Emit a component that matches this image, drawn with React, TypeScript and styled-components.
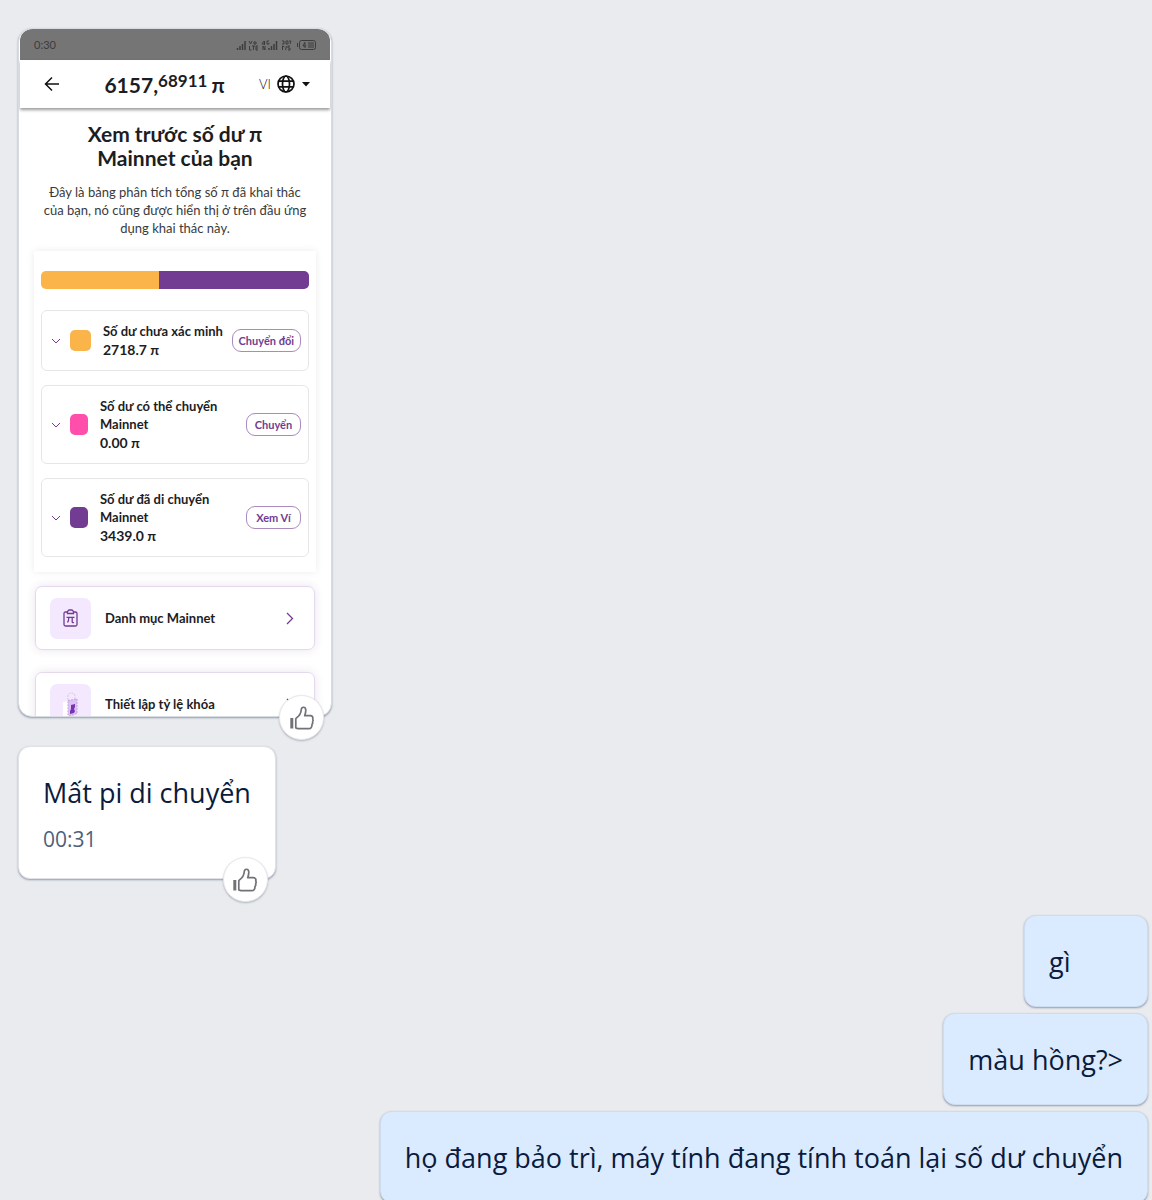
import React from 'react';
import styled, { createGlobalStyle } from 'styled-components';

const Global = createGlobalStyle`
  *, *::before, *::after { box-sizing: border-box; }
  html, body { margin: 0; background: #eaebee; }
  h1, p { margin: 0; }
  button { font-family: inherit; cursor: pointer; }
`;

const UI = `Lato, "Noto Sans", sans-serif`;
const CHAT = `"Open Sans", "Noto Sans", sans-serif`;

const Conversation = styled.main`
  display: flex;
  flex-direction: column;
  min-height: 100vh;
  padding: 28px 4px 0 18px;
  background: #eaebee;
  font-family: ${CHAT};
  color: #0b1b3d;
`;

const Incoming = styled.div<{ $gap?: number }>`
  position: relative;
  align-self: flex-start;
  margin-bottom: ${(p) => p.$gap ?? 0}px;
`;

const Reaction = styled.button`
  position: absolute;
  right: 8px;
  bottom: -23px;
  display: flex;
  align-items: center;
  justify-content: center;
  width: 45px;
  height: 45px;
  padding: 0;
  border: 1px solid #e8e9ec;
  border-radius: 50%;
  background: #fff;
  box-shadow: 0 1px 2px rgba(40, 50, 70, 0.3);
`;

const Bubble = styled.div<{ $own?: boolean }>`
  padding: ${(p) => (p.$own ? '26px 24px 24px' : '26px 24px 25px')};
  min-width: ${(p) => (p.$own ? 124 : 0)}px;
  border: 1px solid ${(p) => (p.$own ? '#cddcee' : '#e0e2e7')};
  border-radius: 12px;
  background: ${(p) => (p.$own ? '#dbebff' : '#fff')};
  box-shadow: 0 1px 2px rgba(60, 75, 110, 0.5);
`;

const Message = styled.p`
  font-size: 27px;
  line-height: 40px;
`;

const Time = styled.time`
  display: block;
  margin-top: 12px;
  font-size: 21px;
  line-height: 28px;
  color: #4f5f7c;
`;

const Outgoing = styled.div`
  display: flex;
  flex-direction: column;
  align-items: flex-end;
  gap: 6px;
`;

const Photo = styled.article`
  width: 314px;
  height: 689px;
  padding: 0 1px;
  overflow: hidden;
  border: 1px solid #d8dbe2;
  border-radius: 14px;
  background: #fff;
  box-shadow: 0 1px 2px rgba(60, 75, 110, 0.5);
  font-family: ${UI};
  color: #1d1d1f;
`;

const StatusBar = styled.div`
  display: flex;
  align-items: center;
  justify-content: space-between;
  height: 31px;
  padding: 0 14px;
  border-radius: 12px 12px 0 0;
  background: #757575;
  font-size: 11px;
  color: #3c3c3c;
`;

const AppBar = styled.header`
  display: flex;
  align-items: center;
  justify-content: space-between;
  height: 48px;
  padding: 0 19px 0 24px;
  background: #fff;
  box-shadow: 0 2px 3px rgba(0, 0, 0, 0.4);
`;

const IconButton = styled.button`
  display: flex;
  padding: 0;
  border: 0;
  background: none;
  color: #111;
`;

const Total = styled.div`
  display: flex;
  align-items: center;
  padding-left: 10px;
  font-size: 21px;
  font-weight: 700;
`;

const Decimals = styled.span`
  padding-bottom: 8px;
  margin-right: 4px;
  font-size: 17px;
`;

const Language = styled.button`
  display: flex;
  align-items: center;
  gap: 6px;
  padding: 0;
  border: 0;
  background: none;
  color: #111;
`;

const LanguageCode = styled.span`
  font-size: 13px;
  font-weight: 300;
`;

const Intro = styled.section`
  padding: 14px 20px;
  text-align: center;
`;

const Title = styled.h1`
  font-size: 21px;
  font-weight: 700;
  line-height: 24px;
`;

const Lead = styled.p`
  margin-top: 13px;
  font-size: 13px;
  line-height: 18px;
  color: #3a3a3c;
`;

const Panel = styled.section`
  display: flex;
  flex-direction: column;
  gap: 14px;
  margin: 0 14px;
  padding: 20px 7px 15px;
  background: #fff;
  box-shadow: 0 0 8px rgba(0, 0, 0, 0.08);
`;

const Bar = styled.div`
  display: flex;
  height: 18px;
  margin-bottom: 7px;
  overflow: hidden;
  border-radius: 5px;
`;

const Share = styled.div<{ $color: string; $part: number }>`
  flex: ${(p) => p.$part};
  background: ${(p) => p.$color};
`;

const Balance = styled.div<{ $tall?: boolean }>`
  display: flex;
  align-items: center;
  height: ${(p) => (p.$tall ? 79 : 61)}px;
  padding: 0 7px 0 9px;
  border: 1px solid #e6e6e8;
  border-radius: 6px;
`;

const Swatch = styled.span<{ $color: string; $wide?: boolean }>`
  flex: none;
  width: ${(p) => (p.$wide ? 21 : 18)}px;
  height: 21px;
  margin: 0 12px 0 9px;
  border-radius: 5px;
  background: ${(p) => p.$color};
`;

const BalanceText = styled.div`
  flex: 1;
  min-width: 0;
  font-weight: 700;
`;

const BalanceName = styled.p`
  font-size: 13px;
  line-height: 18px;
`;

const Amount = styled.p`
  font-size: 14px;
  line-height: 20px;
`;

const Pill = styled.button`
  flex: none;
  min-width: 55px;
  height: 23px;
  padding: 0 6px;
  border: 1px solid #a98bbd;
  border-radius: 9px;
  background: #fff;
  font-size: 11px;
  font-weight: 700;
  white-space: nowrap;
  color: #713c91;
`;

const Links = styled.nav`
  display: flex;
  flex-direction: column;
  gap: 22px;
  padding: 14px 15px 0;
`;

const LinkCard = styled.a`
  display: flex;
  align-items: center;
  height: 64px;
  padding: 0 20px 0 14px;
  border: 1px solid #e5d9ee;
  border-radius: 7px;
  background: #fff;
  box-shadow: 0 0 10px rgba(80, 30, 110, 0.12);
  font-size: 13px;
  font-weight: 700;
  color: inherit;
  text-decoration: none;
`;

const Tile = styled.span`
  display: flex;
  align-items: center;
  justify-content: center;
  width: 41px;
  height: 41px;
  margin-right: 14px;
  border-radius: 7px;
  background: #f3e8fd;
`;

const LinkName = styled.span`
  flex: 1;
`;

const Thumb = () => (
  <svg width="26" height="28" viewBox="0 0 26 28" fill="none" stroke="#707276" strokeWidth="1.700" strokeLinejoin="round">
    <path d="M2.800 14v10.500" strokeWidth="3" />
    <path d="M6.800 15c0-.6.500-1 1-1.400 2.400-1.800 4.200-4.200 4.400-7.600.1-3.900 4.600-3.500 4.600.3 0 2.200-.6 3.800-1.100 5.400h5.600c2.200 0 3 1.700 2.400 3.200.6.900.5 2-.1 2.800.4 1 .1 2-.6 2.700.1 2.400-.9 4.300-3.300 4.300H10c-1.500 0-2-.5-3.200-.7z" />
  </svg>
);

const Chevron = () => (
  <svg width="10" height="6" viewBox="0 0 10 6" fill="none" stroke="#713c91">
    <path d="M1 1l4 4 4-4" />
  </svg>
);

const ChevronRight = () => (
  <svg width="8" height="13" viewBox="0 0 8 13" fill="none" stroke="#713c91" strokeWidth="1.300">
    <path d="M1 1l5.500 5.500L1 12" />
  </svg>
);

const StatusIcons = () => (
  <svg width="80" height="12" viewBox="0 0 80 12" fill="none" stroke="#3c3c3c">
    <path d="M1.500 11V9M4 11V7M6.500 11V5M9 11V2" strokeWidth="1.500" />
    <path d="M13 2l1.500 3L16 2M18 3h2v2h-2zM13.500 7v4h2M16 7h3M17.500 7v4M22 7h-2v4h2M20 9h2" />
    <path d="M28 2l-2 3h3M28.500 2v4M33 2h-2v3h2V4M27 11V7l2 4V7" />
    <path d="M33 11V9M35.500 11V7M38 11V5M40.500 11V2" strokeWidth="1.500" />
    <path d="M46 2h2v3h-2M50 2v3h2V2zM53 2h2l-1 3M46.500 11V7l2 1M50.500 7l-1 4M54 7h-2v2h2v2h-2" />
    <rect x="63.500" y="1.500" width="16" height="9" rx="2" />
    <path d="M61.500 4v4M69 3l-2 4h3M69 4v5M73 3v6M75 3v6M77 3v6" />
  </svg>
);

const BackArrow = () => (
  <svg width="16" height="16" viewBox="0 0 16 16" fill="none" stroke="currentColor" strokeWidth="1.500">
    <path d="M15 8H2M8 1.500L1.500 8 8 14.500" />
  </svg>
);

const Globe = () => (
  <svg width="18" height="18" viewBox="0 0 18 18" fill="none" stroke="currentColor" strokeWidth="1.700">
    <circle cx="9" cy="9" r="8" />
    <ellipse cx="9" cy="9" rx="3.500" ry="8" />
    <path d="M1.500 6.200h15M1.500 11.800h15" />
  </svg>
);

const Caret = () => (
  <svg width="10" height="5" viewBox="0 0 10 5">
    <path d="M1 0h8L5 4.500z" fill="currentColor" />
  </svg>
);

const Clipboard = () => (
  <svg width="15" height="18" viewBox="0 0 15 18" fill="none" stroke="#713c91" strokeWidth="1.300">
    <path d="M4 3H2.500C1.500 3 1 3.500 1 4.500v11c0 1 .5 1.500 1.500 1.500h10c1 0 1.500-.5 1.500-1.500v-11c0-1-.5-1.500-1.500-1.500H11" />
    <path d="M4.500 2.500L6 1h3l1.500 1.500v2h-6zM3.500 8.300h8M5.800 8.300c0 2.500 0 4-1.300 5.200M9.200 8.300V13c0 .7.800.8 1.800.5" />
  </svg>
);

const Lock = () => (
  <svg width="18" height="26" viewBox="0 0 18 26" fill="none">
    <path d="M6 9V5c0-4 7-4 7 0v3" stroke="#d9c4ec" strokeDasharray="2 1" />
    <path d="M1 11l6-1v16l-6-1z" fill="#fff" />
    <path d="M6 9.500l9-1.500v14.500L8 25l-2-1z" fill="#dcc3f2" stroke="#c4a0e2" strokeDasharray="2 1" />
    <path d="M9 14l4-1v3l-1 2 1 2-1 2-4 1v-3l1-2z" fill="#7a32b4" />
  </svg>
);

const balances = [
  { color: '#fbb44a', name: 'Số dư chưa xác minh', amount: '2718.7', action: 'Chuyển đổi', tall: false },
  { color: '#ff4fab', name: 'Số dư có thể chuyển Mainnet', amount: '0.00', action: 'Chuyển', tall: true },
  { color: '#713c91', name: 'Số dư đã di chuyển Mainnet', amount: '3439.0', action: 'Xem Ví', tall: true },
];

const replies = ['gì', 'màu hồng?>', 'họ đang bảo trì, máy tính đang tính toán lại số dư chuyển'];

export default function App() {
  return (
    <Conversation>
      <Global />
      <Incoming $gap={29}>
        <Photo>
          <StatusBar>
            <span>0:30</span>
            <StatusIcons />
          </StatusBar>
          <AppBar>
            <IconButton aria-label="Quay lại"><BackArrow /></IconButton>
            <Total>6157,<Decimals>68911</Decimals>π</Total>
            <Language><LanguageCode>VI</LanguageCode><Globe /><Caret /></Language>
          </AppBar>
          <Intro>
            <Title>Xem trước số dư π<br />Mainnet của bạn</Title>
            <Lead>
              Đây là bảng phân tích tổng số π đã khai thác<br />
              của bạn, nó cũng được hiển thị ở trên đầu ứng<br />
              dụng khai thác này.
            </Lead>
          </Intro>
          <Panel>
            <Bar>
              <Share $color="#fbb44a" $part={2718.7} />
              <Share $color="#713c91" $part={3439} />
            </Bar>
            {balances.map((b) => (
              <Balance key={b.name} $tall={b.tall}>
                <Chevron />
                <Swatch $color={b.color} $wide={!b.tall} />
                <BalanceText>
                  <BalanceName>{b.name}</BalanceName>
                  <Amount>{b.amount} π</Amount>
                </BalanceText>
                <Pill>{b.action}</Pill>
              </Balance>
            ))}
          </Panel>
          <Links>
            <LinkCard href="#mainnet">
              <Tile><Clipboard /></Tile>
              <LinkName>Danh mục Mainnet</LinkName>
              <ChevronRight />
            </LinkCard>
            <LinkCard href="#lockup">
              <Tile><Lock /></Tile>
              <LinkName>Thiết lập tỷ lệ khóa</LinkName>
              <ChevronRight />
            </LinkCard>
          </Links>
        </Photo>
        <Reaction aria-label="Thích"><Thumb /></Reaction>
      </Incoming>
      <Incoming $gap={36}>
        <Bubble>
          <Message>Mất pi di chuyển</Message>
          <Time>00:31</Time>
        </Bubble>
        <Reaction aria-label="Thích"><Thumb /></Reaction>
      </Incoming>
      <Outgoing>
        {replies.map((text) => (
          <Bubble $own key={text}>
            <Message>{text}</Message>
          </Bubble>
        ))}
      </Outgoing>
    </Conversation>
  );
}
